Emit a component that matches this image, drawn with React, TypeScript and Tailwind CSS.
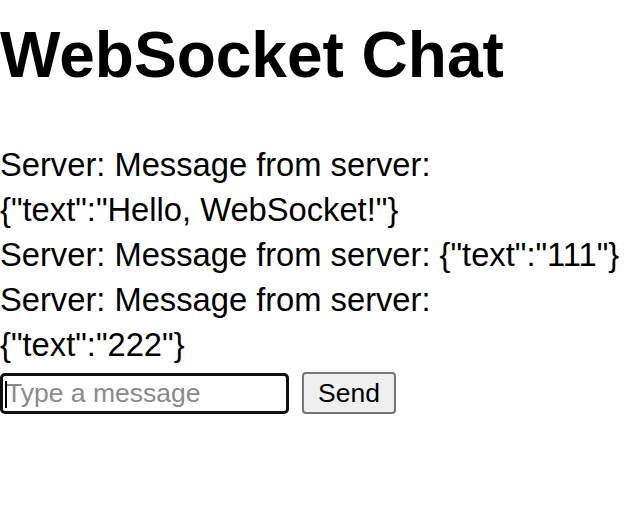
import { useState } from 'react';

// wrapped the way the reference wraps them
const messages = [
  ['Server: Message from server:', '{"text":"Hello, WebSocket!"}'],
  ['Server: Message from server: {"text":"111"}'],
  ['Server: Message from server:', '{"text":"222"}'],
];

export default function App() {
  const [draft, setDraft] = useState('');

  return (
    <div className="w-[634px] h-[514px] bg-white text-black font-['Liberation_Sans',Arial,sans-serif]">
      <h1 className="pt-[18px] text-[64px] leading-[74px] font-bold">WebSocket Chat</h1>

      <div className="mt-[50px] text-[32.7px] leading-[45px] whitespace-nowrap">
        {messages.map((lines, i) => (
          <div key={i}>
            {lines.map((l, j) => (
              <div key={j}>{l}</div>
            ))}
          </div>
        ))}
      </div>

      {/* composer */}
      <div className="mt-[5px] flex items-center gap-[13px]">
        <div className="relative">
          <input
            value={draft}
            onChange={(e) => setDraft(e.target.value)}
            placeholder="Type a message"
            className="w-[289px] h-[41px] border-[3px] border-[#101010] rounded-[5px] px-[3px] text-[26.5px] outline-none placeholder:text-[#8a8a8a]"
          />
          <span className="absolute left-[5px] top-[8px] w-[2px] h-[27px] bg-black" />
        </div>
        <button className="h-[42px] px-[14px] bg-[#efefef] border-2 border-[#767676] rounded-[4px] text-[26.5px] leading-none">
          Send
        </button>
      </div>
    </div>
  );
}
